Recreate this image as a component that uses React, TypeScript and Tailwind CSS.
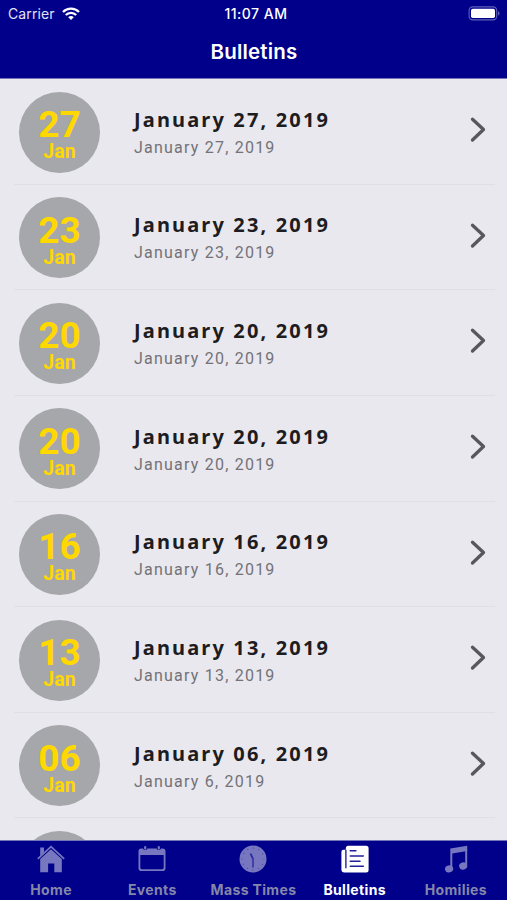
import type { ReactNode } from "react";

type Bulletin = { day: string; title: string; subtitle: string };

const bulletins: Bulletin[] = [
  { day: "27", title: "January 27, 2019", subtitle: "January 27, 2019" },
  { day: "23", title: "January 23, 2019", subtitle: "January 23, 2019" },
  { day: "20", title: "January 20, 2019", subtitle: "January 20, 2019" },
  { day: "20", title: "January 20, 2019", subtitle: "January 20, 2019" },
  { day: "16", title: "January 16, 2019", subtitle: "January 16, 2019" },
  { day: "13", title: "January 13, 2019", subtitle: "January 13, 2019" },
  { day: "06", title: "January 06, 2019", subtitle: "January 6, 2019" },
];

function WifiIcon() {
  return (
    <svg width="18" height="14" viewBox="0 0 18 14" fill="none" stroke="white" strokeWidth="2.3">
      <path d="M1 5C5.4.5 12.6.5 17 5" />
      <path d="M3.8 8C6.7 5.1 11.3 5.1 14.2 8" />
      <path d="M6.2 10.2C7.8 8.7 10.2 8.7 11.8 10.2L9 13Z" fill="white" stroke="none" />
    </svg>
  );
}

function BatteryIcon() {
  return (
    <svg width="33" height="15" viewBox="0 0 33 15">
      <rect x="1.1" y="0.9" width="27.6" height="13" rx="3.6" fill="none" stroke="#6060b8" strokeWidth="1.1" />
      <rect x="3" y="2.7" width="24" height="9.4" rx="1.8" fill="white" />
      <path d="M30 5.2c2 .7 2 3.7 0 4.4z" fill="#6060b8" />
    </svg>
  );
}

function HomeIcon() {
  return (
    <svg width="28" height="28" viewBox="0 0 28 28" fill="currentColor">
      <path d="M3.2 2.4H7v4.9l-3.8 3.7z" />
      <path d="M.8 13.8 14 1.6l13.2 12.2" fill="none" stroke="currentColor" strokeWidth="1.7" />
      <path d="M3.2 14.1 14 4.2l10.8 9.9v13.2h-7.5v-8.9h-6.2v8.9H3.2z" />
    </svg>
  );
}

function CalendarIcon() {
  return (
    <svg width="28" height="28" viewBox="0 0 28 28">
      <path
        fill="currentColor"
        fillRule="evenodd"
        d="M3.3 3.4H5a2.3 2.3 0 0 0 4.4 0h9.2a2.3 2.3 0 0 0 4.4 0h1.7a2.8 2.8 0 0 1 2.8 2.8v17a2.8 2.8 0 0 1-2.8 2.8H3.3a2.8 2.8 0 0 1-2.8-2.8v-17a2.8 2.8 0 0 1 2.8-2.8zM2.3 10v12.6a1.6 1.6 0 0 0 1.6 1.6h20.2a1.6 1.6 0 0 0 1.6-1.6V10z"
      />
      <path d="M7.2 2v1.6M20.8 2v1.6" stroke="currentColor" strokeWidth="2.2" strokeLinecap="round" />
    </svg>
  );
}

function ClockIcon() {
  return (
    <svg width="28" height="28" viewBox="0 0 28 28">
      <circle cx="14" cy="14" r="13.5" fill="currentColor" />
      <circle cx="14" cy="14" r="10.9" fill="none" stroke="#4f4fae" strokeWidth="1.2" strokeDasharray="1.2 4.507" strokeDashoffset="0.6" />
      <path d="m11.5 8.7 2.5 5.1" stroke="#2929a0" strokeWidth="1.8" />
      <path d="M14 13v9.5" stroke="#3a3aa5" strokeWidth="1.8" />
    </svg>
  );
}

function NewsIcon() {
  return (
    <svg width="28" height="28" viewBox="0 0 28 28">
      <path fill="white" d="M7.3.7h17.8a2.5 2.5 0 0 1 2.5 2.5v21.9a2.5 2.5 0 0 1-2.5 2.5H3.4a3 3 0 0 1-3-3V6.8a2 2 0 0 1 2-2h2.4V3.2A2.5 2.5 0 0 1 7.3.7z" />
      <path d="M4.9 4.8v18.5" stroke="#00008b" strokeWidth="1.2" />
      <path d="M9.3 5.8h5.6M9.3 11h13M9.3 16.2h9.7M9.3 21.3h13" stroke="#202099" strokeWidth="1.6" strokeLinecap="round" />
    </svg>
  );
}

function MusicIcon() {
  return (
    <svg width="28" height="28" viewBox="0 0 28 28" fill="currentColor">
      <path d="M8.3 3.4 25.2.8v5.3L10.3 8.6v15h-2z" />
      <path d="M23.2 4h2v16.2h-2z" />
      <ellipse cx="7.1" cy="23.9" rx="4.1" ry="3.5" transform="rotate(-15 7.1 23.9)" />
      <ellipse cx="21.2" cy="21" rx="4.1" ry="3.5" transform="rotate(-15 21.2 21)" />
    </svg>
  );
}

function BulletinRow({ day, title, subtitle }: Bulletin) {
  return (
    <li className="flex h-[105.65px] shrink-0 items-start pt-[12.5px] pl-[19px]">
      <div className="flex size-[81px] shrink-0 flex-col items-center rounded-full bg-[#a5a7aa] pt-[14.4px] font-['Roboto',sans-serif] font-bold text-[#ffd800]">
        <span className="text-[37px] leading-[38px]">{day}</span>
        <span className="text-[19.5px] leading-[15px]">Jan</span>
      </div>
      <div className="ml-[34px] flex h-[93.15px] grow flex-col pt-[14.3px] whitespace-nowrap">
        <span className="font-['Noto_Sans',sans-serif] text-[20px] leading-[28px] font-bold tracking-[2.15px] text-[#1d1c20]">{title}</span>
        <span className="font-['Roboto',sans-serif] text-[16px] leading-[28px] tracking-[1.22px] text-[#737277]">{subtitle}</span>
      </div>
      <svg className="mt-[24.7px] mr-[20px] shrink-0" width="18" height="28" viewBox="0 0 18 28" fill="none" stroke="#58575b" strokeWidth="3.3" strokeLinecap="round" strokeLinejoin="round">
        <path d="M3.5 3.2 14.5 13.5 3.5 24" />
      </svg>
    </li>
  );
}

function Tab({ label, icon, active = false }: { label: string; icon: ReactNode; active?: boolean }) {
  return (
    <div className={`flex w-[101.2px] shrink-0 flex-col items-center pt-[4px] ${active ? "text-white" : "text-[#7777c0]"}`}>
      {icon}
      <span className={`mt-[8px] text-[14px] leading-[18px] font-bold tracking-[0.35px] whitespace-nowrap ${active ? "text-white" : "text-[#8587a9]"}`}>
        {label}
      </span>
    </div>
  );
}

export default function App() {
  return (
    <div className="flex h-[900px] w-[507px] flex-col overflow-hidden bg-[#e9e8ee] font-['Inter',sans-serif]">
      <header className="h-[79px] shrink-0 border-b border-[#7474b8] bg-[#00008b] text-white">
        <div className="grid h-[27px] grid-cols-3 items-center pr-[6px] pl-[8px]">
          <div className="flex items-center gap-[7px] text-[14px] tracking-[0.1px] text-[#e2e2f5]">
            Carrier
            <WifiIcon />
          </div>
          <span className="pl-[3px] text-center text-[14px] font-medium tracking-[0.5px] whitespace-nowrap">11:07 AM</span>
          <div className="flex justify-end">
            <BatteryIcon />
          </div>
        </div>
        <h1 className="pl-[1px] text-center text-[20.5px] leading-[50px] font-semibold tracking-[0.2px]">Bulletins</h1>
      </header>
      <ul className="flex min-h-0 grow flex-col overflow-hidden">
        {bulletins.map((item, index) => (
          <div key={index} className="shrink-0">
            <BulletinRow {...item} />
            <div className="-mt-px mr-[12px] ml-[14px] h-px bg-[#e0dfe4]" />
          </div>
        ))}
        <li className="pt-[12.5px] pl-[19px]">
          <div className="size-[81px] rounded-full bg-[#a5a7aa]" />
        </li>
      </ul>
      <nav className="flex h-[60px] shrink-0 border-t border-[#7474b8] bg-[#00008b] pl-[0.5px]">
        <Tab label="Home" icon={<HomeIcon />} />
        <Tab label="Events" icon={<CalendarIcon />} />
        <Tab label="Mass Times" icon={<ClockIcon />} />
        <Tab label="Bulletins" icon={<NewsIcon />} active />
        <Tab label="Homilies" icon={<MusicIcon />} />
      </nav>
    </div>
  );
}
